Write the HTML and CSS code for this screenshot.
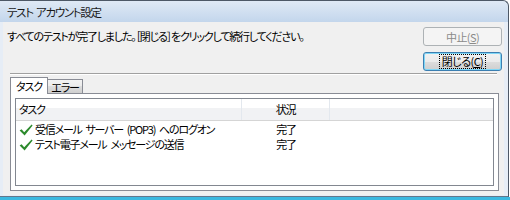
FILE: index.html
```html
<!DOCTYPE html>
<html lang="ja">
<head>
<meta charset="utf-8">
<link rel="stylesheet" href="styles.css">
</head>
<body>
<div class="window">
  <div class="titlebar"><span class="title">テスト アカウント設定</span></div>
  <div class="client">
    <div class="top">
      <p class="msg">すべてのテストが完了しました。［閉じる］をクリックして続行してください。</p>
      <div class="buttons">
        <button class="btn btn-disabled" disabled>中止(<u>S</u>)</button>
        <button class="btn btn-default"><span class="focus">閉じる(<u>C</u>)</span></button>
      </div>
    </div>
    <div class="sep"></div>
    <div class="tabs">
      <div class="tab tab-sel">タスク</div>
      <div class="tab">エラー</div>
    </div>
    <div class="panel">
      <div class="list">
        <div class="header">
          <div class="hc c1">タスク</div>
          <div class="hc c2">状況</div>
          <div class="hc c3"></div>
        </div>
        <div class="row">
          <div class="c1"><svg class="check" viewBox="0 0 14 12" width="14" height="12"><path d="M0.6 6.6 L2.6 5.3 L5.2 8.2 L12.6 0.6 L13.6 1.4 L5.6 11.4 Z" fill="#2c8a2c"/></svg><span class="rt">受信メール サーバー (POP3) へのログオン</span></div>
          <div class="c2">完了</div>
        </div>
        <div class="row">
          <div class="c1"><svg class="check" viewBox="0 0 14 12" width="14" height="12"><path d="M0.6 6.6 L2.6 5.3 L5.2 8.2 L12.6 0.6 L13.6 1.4 L5.6 11.4 Z" fill="#2c8a2c"/></svg><span class="rt">テスト電子メール メッセージの送信</span></div>
          <div class="c2">完了</div>
        </div>
      </div>
    </div>
  </div>
</div>
<div class="strip"></div>
</body>
</html>
```
FILE: styles.css
```css
* { box-sizing: border-box; }
body {
  margin: 0;
  background: #fff;
  font-family: "Noto Sans CJK JP", "Noto Sans", sans-serif;
  font-size: 11px;
  letter-spacing: -1.2px;
  color: #000;
  font-feature-settings: "palt";
}
.window {
  width: 509px;
  height: 197px;
  border-top: 1px solid #4d5866;
  border-right: 1px solid #4d5866;
  border-bottom: 1px solid #64768a;
  border-top-right-radius: 6px;
  background: linear-gradient(#dfe9f5, #c3d6ec 21px, #e6edf6 21px);
  display: flex;
  flex-direction: column;
}
.titlebar {
  height: 21px;
  padding-left: 7px;
  display: flex;
  align-items: center;
}
.title { font-size: 11.5px; line-height: 16px; letter-spacing: -1.3px; word-spacing: 2px; color: #1a1a1a; }
.client {
  margin-left: 3px;
  width: 501px;
  height: 173px;
  background: #f0f0f0;
}
.top {
  display: flex;
  justify-content: space-between;
  padding: 5px 2px 0 4px;
}
.msg { margin: 0; line-height: 18px; }
.buttons { display: flex; flex-direction: column; gap: 6px; }
.btn {
  width: 79px;
  height: 19px;
  padding: 0;
  border-radius: 3px;
  font: inherit;
  font-size: 11px;
  letter-spacing: -0.6px;
  line-height: 14px;
  display: flex;
  align-items: center;
  justify-content: center;
}
.btn u { text-decoration: underline; }
.btn-disabled {
  border: 1px solid #adb2b5;
  background: #f4f4f4;
  color: #8a8a8a;
}
.btn-default {
  border: 1px solid #3c7fb1;
  background: linear-gradient(#f2f2f2, #ebebeb 50%, #dddddd 50%, #cfcfcf);
  box-shadow: inset 0 0 0 1px #7fd6f6;
  color: #000;
}
.focus { outline: 1px dotted #000; padding: 0 2px; line-height: 13px; }
.sep {
  margin: 2px 7px 0 7px;
  height: 2px;
  border-top: 1px solid #a0a0a0;
  border-bottom: 1px solid #fff;
}
.tabs {
  display: flex;
  align-items: flex-end;
  height: 16px;
  margin: 2px 0 0 7px;
  position: relative;
  z-index: 1;
}
.tab {
  width: 36px;
  height: 14px;
  margin-left: -1px;
  border: 1px solid #898c95;
  border-bottom: none;
  background: linear-gradient(#f2f2f2, #ebebeb 50%, #dddddd 50%, #cfcfcf);
  text-align: center;
  line-height: 14px;
}
.tab-sel {
  width: 38px;
  height: 17px;
  margin-left: 0;
  margin-bottom: -1px;
  background: #fff;
  line-height: 16px;
  position: relative;
  z-index: 2;
}
.panel {
  margin-left: 7px;
  width: 489px;
  height: 98px;
  border: 1px solid #898c95;
  background: #fff;
  padding: 4px;
}
.list {
  height: 100%;
  border: 1px solid #828790;
  background: #fff;
}
.header {
  display: flex;
  height: 22px;
  border-bottom: 1px solid #d5d5d5;
  background: linear-gradient(#ffffff, #ffffff 45%, #f1f2f4 45%, #f1f2f4);
}
.hc { line-height: 21px; }
.c1 { width: 226px; padding-left: 3px; display: flex; align-items: center; }
.c2 { width: 88px; text-align: center; }
.hc.c1 { border-right: 1px solid #e3e8ee; }
.hc.c2 { border-right: 1px solid #e3e8ee; }
.hc.c3 { flex: 1; }
.row { display: flex; height: 15px; line-height: 15px; }
.header + .row { margin-top: 1px; }
.rt { word-spacing: 2.5px; }
.check { margin-right: 2px; flex: none; }
.strip { height: 3px; background: #3bb8e0; }
```
